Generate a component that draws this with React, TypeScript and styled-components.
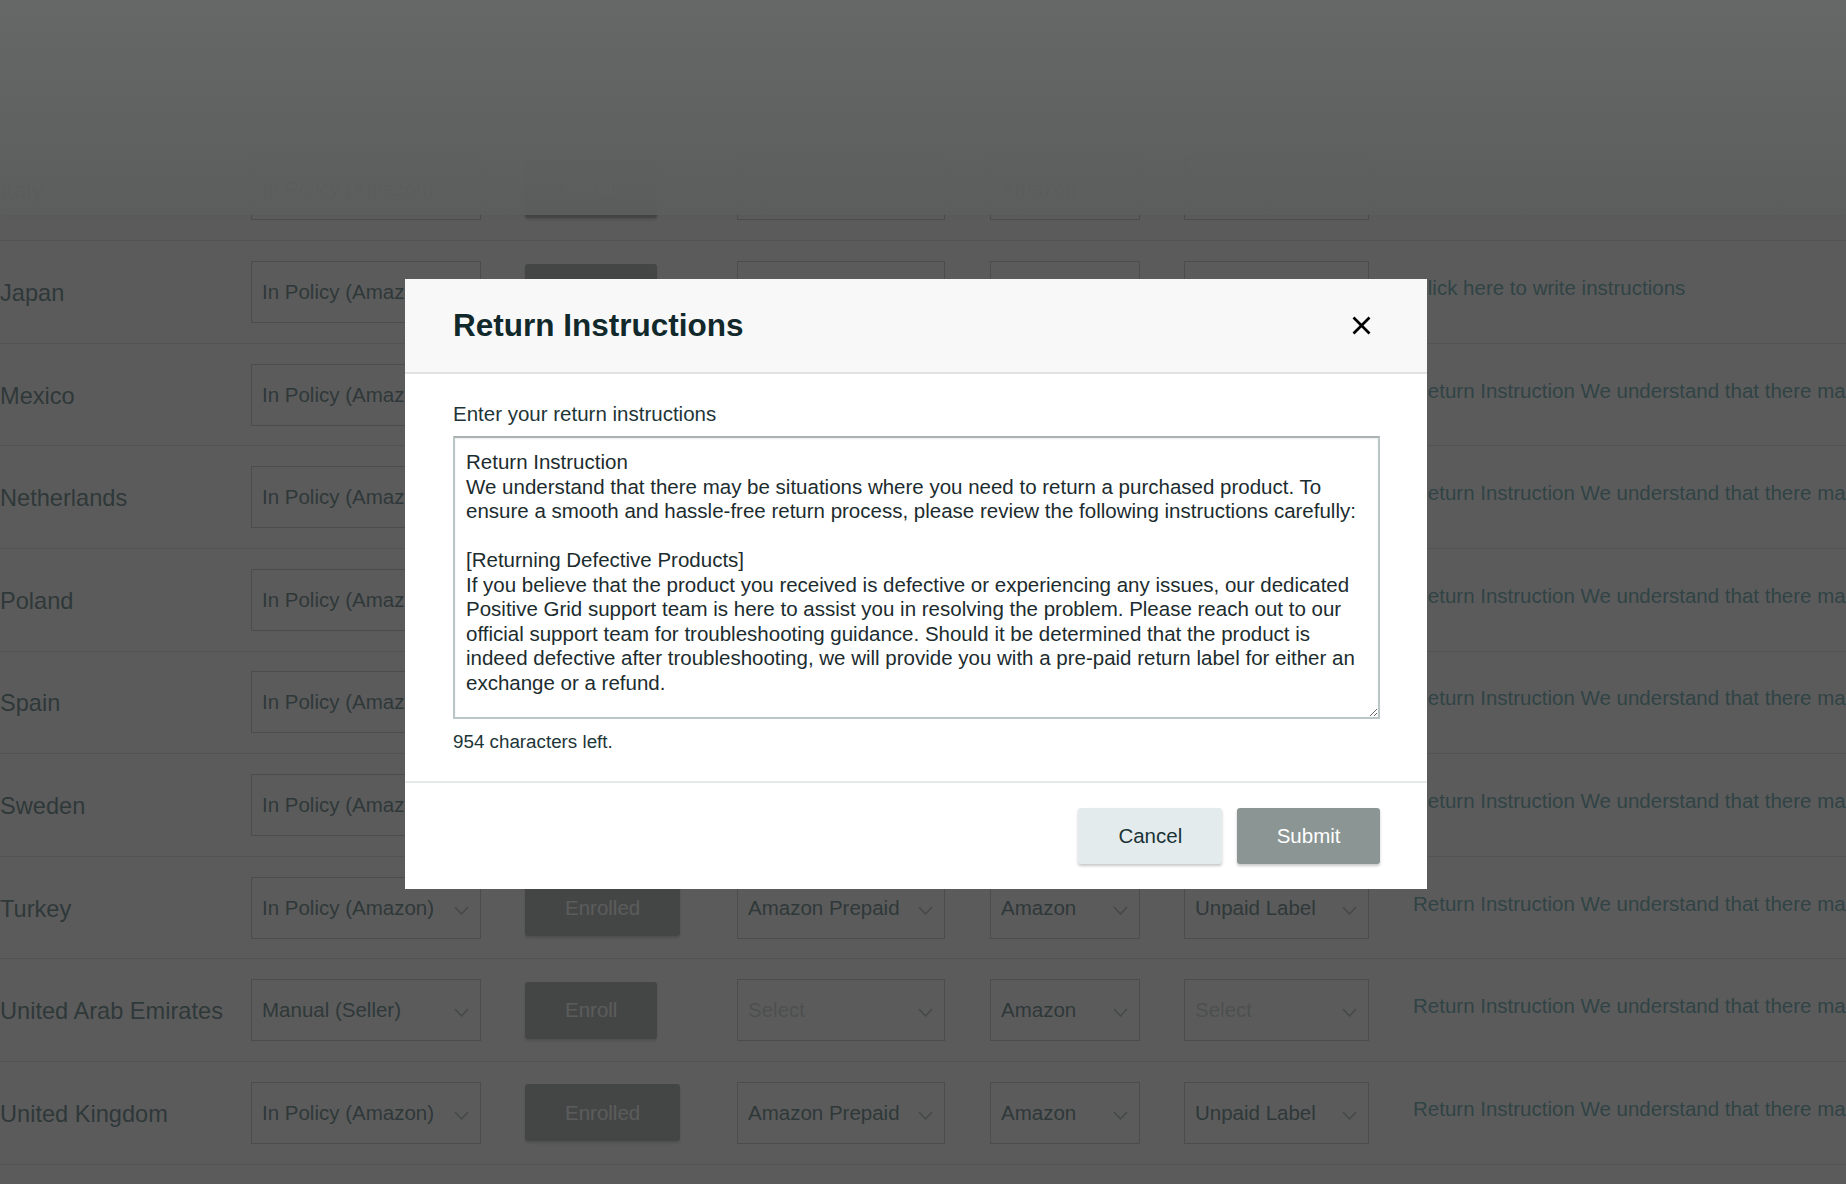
import React, { useState } from "react";
import styled, { createGlobalStyle } from "styled-components";

const GlobalStyle = createGlobalStyle`
  html, body {
    margin: 0;
    padding: 0;
  }
  body {
    width: 1846px;
    height: 1184px;
    overflow: hidden;
    background: #ffffff;
    font-family: "Liberation Sans", Arial, sans-serif;
  }
  * {
    box-sizing: border-box;
  }
`;

const INITIAL_TEXT =
  "Return Instruction\n" +
  "We understand that there may be situations where you need to return a purchased product. To ensure a smooth and hassle-free return process, please review the following instructions carefully:\n" +
  "\n" +
  "[Returning Defective Products]\n" +
  "If you believe that the product you received is defective or experiencing any issues, our dedicated Positive Grid support team is here to assist you in resolving the problem. Please reach out to our official support team for troubleshooting guidance. Should it be determined that the product is indeed defective after troubleshooting, we will provide you with a pre-paid return label for either an exchange or a refund.";

const LIMIT = INITIAL_TEXT.length + 954;

const SHORT_NOTE =
  "Return Instruction We understand that there may be situations where you need to return a purchased product.";

type Marketplace = {
  country: string;
  policy: string;
  enroll: "Enroll" | "Enrolled";
  prepaid?: string;
  carrier: string;
  labelType?: string;
  note: string;
};

const ROWS: Marketplace[] = [
  { country: "Italy", policy: "In Policy (Amazon)", enroll: "Enroll", carrier: "Amazon", note: "" },
  { country: "Japan", policy: "In Policy (Amazon)", enroll: "Enroll", carrier: "Amazon", note: "Click here to write instructions" },
  { country: "Mexico", policy: "In Policy (Amazon)", enroll: "Enrolled", prepaid: "Amazon Prepaid", carrier: "Amazon", labelType: "Unpaid Label", note: SHORT_NOTE },
  { country: "Netherlands", policy: "In Policy (Amazon)", enroll: "Enrolled", prepaid: "Amazon Prepaid", carrier: "Amazon", labelType: "Unpaid Label", note: SHORT_NOTE },
  { country: "Poland", policy: "In Policy (Amazon)", enroll: "Enrolled", prepaid: "Amazon Prepaid", carrier: "Amazon", labelType: "Unpaid Label", note: SHORT_NOTE },
  { country: "Spain", policy: "In Policy (Amazon)", enroll: "Enrolled", prepaid: "Amazon Prepaid", carrier: "Amazon", labelType: "Unpaid Label", note: SHORT_NOTE },
  { country: "Sweden", policy: "In Policy (Amazon)", enroll: "Enrolled", prepaid: "Amazon Prepaid", carrier: "Amazon", labelType: "Unpaid Label", note: SHORT_NOTE },
  { country: "Turkey", policy: "In Policy (Amazon)", enroll: "Enrolled", prepaid: "Amazon Prepaid", carrier: "Amazon", labelType: "Unpaid Label", note: SHORT_NOTE },
  { country: "United Arab Emirates", policy: "Manual (Seller)", enroll: "Enroll", carrier: "Amazon", note: SHORT_NOTE },
  { country: "United Kingdom", policy: "In Policy (Amazon)", enroll: "Enrolled", prepaid: "Amazon Prepaid", carrier: "Amazon", labelType: "Unpaid Label", note: SHORT_NOTE },
  { country: "United States", policy: "In Policy (Amazon)", enroll: "Enrolled", prepaid: "Amazon Prepaid", carrier: "Amazon", labelType: "Unpaid Label", note: SHORT_NOTE },
];

/* ---------- page behind the dialog ---------- */

const Page = styled.div`
  position: relative;
  width: 1846px;
  height: 1184px;
  overflow: hidden;
`;

const TopBand = styled.div`
  position: relative;
  z-index: 1;
  height: 215px;
  background: rgba(255, 255, 255, 0.95);
  box-shadow: 0 2px 4px rgba(0, 0, 0, 0.06);
`;

const Table = styled.div`
  margin-top: -76.4px;
`;

const Row = styled.div`
  display: grid;
  grid-template-columns: 251px 274px 212px 253px 194px 229px 1fr;
  align-items: center;
  height: 102.6px;
  border-bottom: 1px solid #d7d7d7;
`;

const Country = styled.div`
  margin-top: 3px;
  font-size: 23.6px;
  color: #244f55;
  white-space: nowrap;
`;

const SelectBox = styled.div<{ $w: number }>`
  width: ${(p) => p.$w}px;
  height: 62px;
  border: 1px solid #b4b4b4;
  background: #ffffff;
  padding: 0 11px 0 10px;
  display: flex;
  align-items: center;
  justify-content: space-between;
`;

const SelectText = styled.span<{ $placeholder?: boolean }>`
  font-size: 20.5px;
  color: ${(p) => (p.$placeholder ? "#b8c4c4" : "#244f55")};
  white-space: nowrap;
  overflow: hidden;
`;

const Chevron = styled.svg`
  flex: none;
  margin-top: 5px;
`;

const EnrollButton = styled.button`
  justify-self: start;
  height: 57px;
  padding: 0 40px;
  border: none;
  border-radius: 3px;
  background: #8a9594;
  color: #ffffff;
  font-family: inherit;
  font-size: 20.5px;
  box-shadow: 0 2px 3px rgba(0, 0, 0, 0.25);
`;

const NoteLink = styled.a`
  margin-bottom: 8px;
  font-size: 20.5px;
  color: #2a8890;
  white-space: nowrap;
  text-decoration: none;
`;

function Select({ width, value }: { width: number; value?: string }) {
  return (
    <SelectBox $w={width}>
      <SelectText $placeholder={!value}>{value ?? "Select"}</SelectText>
      <Chevron width="15" height="9" viewBox="0 0 15 9">
        <polyline points="1,1 7.5,8 14,1" fill="none" stroke="#8a9a9b" strokeWidth="1.4" />
      </Chevron>
    </SelectBox>
  );
}

/* ---------- dialog ---------- */

const Backdrop = styled.div`
  position: fixed;
  inset: 0;
  z-index: 10;
  display: flex;
  align-items: center;
  justify-content: center;
  padding: 0 14px 17px 0;
  background: linear-gradient(
    180deg,
    rgba(64, 65, 65, 0.8) 0px,
    rgba(51, 52, 52, 0.8) 215px,
    rgba(50, 50, 50, 0.8) 215px,
    rgba(50, 50, 50, 0.8) 100%
  );
`;

const Modal = styled.div`
  width: 1022px;
  background: #ffffff;
  display: flex;
  flex-direction: column;
`;

const ModalHeader = styled.div`
  height: 95px;
  padding: 0 47px 0 48px;
  background: #f8f8f8;
  border-bottom: 2px solid #e1e3e3;
  display: flex;
  align-items: center;
  justify-content: space-between;
`;

const Title = styled.h2`
  margin: 0;
  font-size: 31.5px;
  line-height: 36px;
  font-weight: 700;
  color: #12292c;
`;

const CloseButton = styled.button`
  width: 38px;
  height: 38px;
  padding: 0;
  border: none;
  background: transparent;
  display: flex;
  align-items: center;
  justify-content: center;
  cursor: pointer;
`;

const ModalBody = styled.div`
  padding: 28px 47px 28px 48px;
  display: flex;
  flex-direction: column;
`;

const FieldLabel = styled.label`
  font-size: 20.5px;
  line-height: 24px;
  color: #1e3538;
  margin-bottom: 10px;
`;

const TextArea = styled.textarea`
  display: block;
  width: 100%;
  height: 283px;
  margin: 0;
  padding: 12.5px 2px 9px 11px;
  border: 2px solid #bac5c6;
  border-top-color: #a9b1b2;
  border-radius: 0;
  box-shadow: inset 0 1px 2px rgba(0, 0, 0, 0.08);
  font-family: "Liberation Sans", Arial, sans-serif;
  font-size: 20.5px;
  line-height: 24.5px;
  color: #1c2c2e;
  resize: vertical;
  outline: none;
`;

const CharsLeft = styled.div`
  margin-top: 12px;
  font-size: 18.8px;
  line-height: 22px;
  color: #1e3538;
`;

const ModalFooter = styled.div`
  height: 108px;
  padding: 0 47px;
  border-top: 2px solid #e6e9e9;
  display: flex;
  align-items: center;
  justify-content: flex-end;
  gap: 15px;
`;

const FooterButton = styled.button<{ $primary?: boolean }>`
  height: 56px;
  padding: 0 ${(p) => (p.$primary ? 39.5 : 40)}px;
  border: none;
  border-radius: 3px;
  background: ${(p) => (p.$primary ? "#8a9594" : "#e4ebed")};
  color: ${(p) => (p.$primary ? "#ffffff" : "#1a3336")};
  font-family: inherit;
  font-size: 20.5px;
  box-shadow: 0 2px 3px rgba(0, 0, 0, 0.22);
  cursor: pointer;
`;

export default function App() {
  const [text, setText] = useState(INITIAL_TEXT);
  const left = LIMIT - text.length;

  return (
    <>
      <GlobalStyle />
      <Page>
        <TopBand />
        <Table>
          {ROWS.map((r) => (
            <Row key={r.country}>
              <Country>{r.country}</Country>
              <Select width={230} value={r.policy} />
              <EnrollButton>{r.enroll}</EnrollButton>
              <Select width={208} value={r.prepaid} />
              <Select width={150} value={r.carrier} />
              <Select width={185} value={r.labelType} />
              <NoteLink>{r.note}</NoteLink>
            </Row>
          ))}
        </Table>
      </Page>

      <Backdrop>
        <Modal role="dialog" aria-labelledby="return-title">
          <ModalHeader>
            <Title id="return-title">Return Instructions</Title>
            <CloseButton aria-label="Close">
              <svg width="19" height="19" viewBox="0 0 19 19">
                <line x1="1.5" y1="1.5" x2="17.5" y2="17.5" stroke="#000" strokeWidth="2.6" />
                <line x1="17.5" y1="1.5" x2="1.5" y2="17.5" stroke="#000" strokeWidth="2.6" />
              </svg>
            </CloseButton>
          </ModalHeader>
          <ModalBody>
            <FieldLabel htmlFor="return-text">Enter your return instructions</FieldLabel>
            <TextArea
              id="return-text"
              value={text}
              maxLength={LIMIT}
              spellCheck={false}
              onChange={(e) => setText(e.target.value)}
            />
            <CharsLeft>{left} characters left.</CharsLeft>
          </ModalBody>
          <ModalFooter>
            <FooterButton>Cancel</FooterButton>
            <FooterButton $primary>Submit</FooterButton>
          </ModalFooter>
        </Modal>
      </Backdrop>
    </>
  );
}
